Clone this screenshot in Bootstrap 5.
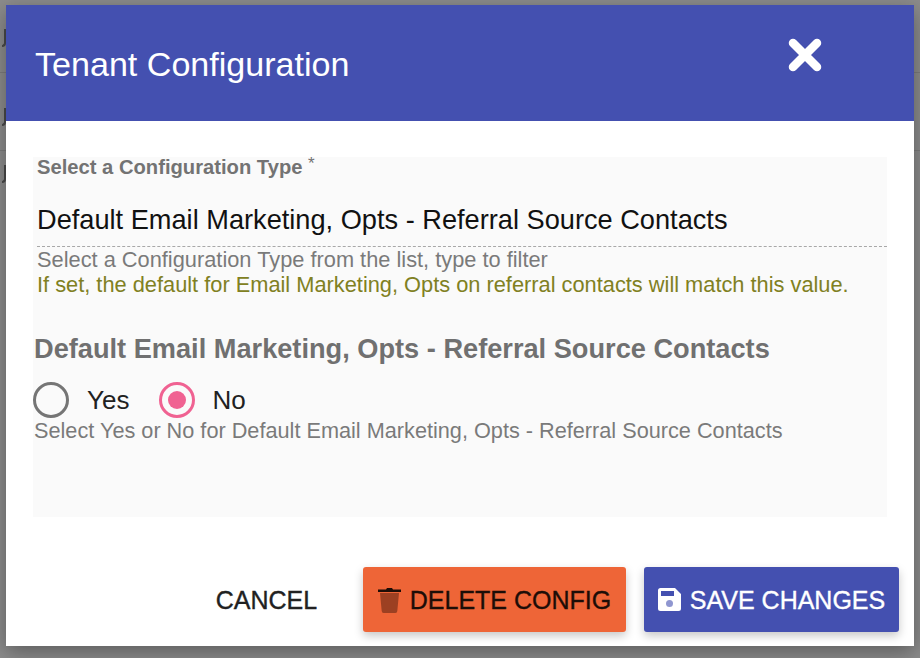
<!DOCTYPE html>
<html lang="en">
<head>
<meta charset="utf-8">
<title>Tenant Configuration</title>
<link href="https://cdn.jsdelivr.net/npm/bootstrap@5.3.0/dist/css/bootstrap.min.css" rel="stylesheet">
<style>
html,body{height:100%;overflow:hidden}
body{background:#8c8c8c;font-family:"Liberation Sans",Arial,sans-serif;color:#212121;position:relative}
.under-page{position:absolute;inset:0;z-index:0}
.under-line{position:absolute;left:0;right:0;height:1px;background:#7c7c7c}
.under-mark{position:absolute;left:0;width:6px;overflow:hidden;display:block}
.under-mark::before{content:"";display:block;width:4px;height:18px;margin-left:2px;border-radius:0 0 5px 0;border-right:2px solid #4a4a4a;border-bottom:2px solid #4a4a4a;filter:blur(.4px)}
.dialog-wrap{position:relative;z-index:1;padding:5px 6px 12px}
.dialog-box{height:641px;background:#fff;box-shadow:0 6px 20px rgba(0,0,0,.35)}
.dialog-head{height:116px;background:#4450b0;color:#fff;padding:0 30px 0 29px}
.dialog-title{font-size:34.1px;font-weight:400;margin:0;line-height:1;position:relative;top:1px}
.close-x{width:36px;height:36px;margin-right:61px;background:none;border:0;padding:0;display:block;position:relative;top:-8px}
.dialog-body{padding:36px 27px 0 27px}
.form-panel{height:360px;background:#fafafa}
.select-block{padding:0 0 0 4px}
.field-label{font-size:20.2px;font-weight:700;color:#737373;line-height:21px;display:block}
.field-label sup{font-size:17px;font-weight:400;top:-.3em}
.fake-select{font-size:27.2px;line-height:31px;color:#111;padding-top:26px;padding-bottom:11px;border-bottom:1px dashed #a8a8a8}
.help-gray{font-size:21.8px;color:#7a7a7a;line-height:25px;margin-top:0}
.help-olive{font-size:21.8px;color:#808022;line-height:25px}
.radio-heading{font-size:27.2px;font-weight:700;color:#707070;line-height:32px;margin:0;padding:36px 0 0 1px}
.radio-row{height:36px;margin-top:17px}
.radio-ring{width:36px;height:36px;border-radius:50%;border:3px solid #757575;flex:none;display:flex;align-items:center;justify-content:center}
.radio-ring.is-on{border-color:#f06292}
.radio-ring.is-on::after{content:"";width:18px;height:18px;border-radius:50%;background:#f06292}
.radio-txt{font-size:26px;color:#212121;margin-left:18px;margin-right:30px;line-height:36px}
.is-on + .radio-txt{margin-left:17px}
.radio-help{font-size:21.7px;color:#7a7a7a;line-height:24px;margin-top:1px;padding-left:1px}
.dialog-foot{padding:50px 15px 0 0}
.act-btn{height:65px;border-radius:3px;border:0;font-size:25px;line-height:1;font-weight:400;display:flex;align-items:center;justify-content:center;box-shadow:0 4px 10px rgba(0,0,0,.22);-webkit-text-stroke:.35px currentColor;padding:8px 6px 6px}
.act-cancel{background:transparent;box-shadow:none;color:#212121;width:135px;margin-right:29px}
.act-delete{background:#ee6537;color:#1d0d07;width:263px;margin-right:18px}
.act-save{background:#4450b0;color:#fff;width:255px}
.act-btn svg{flex:none;margin-right:9px;margin-top:-2px}
</style>
</head>
<body>
<div class="under-page" aria-hidden="true">
  <div class="under-line" style="top:72px"></div>
  <div class="under-line" style="top:150px"></div>
  <span class="under-mark" style="top:29px"></span>
  <span class="under-mark" style="top:108px"></span>
  <span class="under-mark" style="top:165px"></span>
</div>
<div class="dialog-wrap">
  <div class="dialog-box d-flex flex-column">
    <div class="dialog-head d-flex align-items-center justify-content-between">
      <h5 class="dialog-title">Tenant Configuration</h5>
      <button class="close-x" type="button" aria-label="Close">
        <svg width="36" height="36" viewBox="0 0 36 36"><path d="M6 6 30 30M30 6 6 30" stroke="#fff" stroke-width="8.5" stroke-linecap="round"/></svg>
      </button>
    </div>
    <div class="dialog-body">
      <div class="form-panel">
        <div class="select-block">
          <label class="field-label">Select a Configuration Type <sup>*</sup></label>
          <div class="fake-select">Default Email Marketing, Opts - Referral Source Contacts</div>
          <div class="help-gray">Select a Configuration Type from the list, type to filter</div>
          <div class="help-olive">If set, the default for Email Marketing, Opts on referral contacts will match this value.</div>
        </div>
        <h6 class="radio-heading">Default Email Marketing, Opts - Referral Source Contacts</h6>
        <div class="radio-row d-flex align-items-center">
          <span class="radio-ring"></span><span class="radio-txt">Yes</span>
          <span class="radio-ring is-on"></span><span class="radio-txt">No</span>
        </div>
        <div class="radio-help">Select Yes or No for Default Email Marketing, Opts - Referral Source Contacts</div>
      </div>
    </div>
    <div class="dialog-foot d-flex justify-content-end">
      <button type="button" class="btn act-btn act-cancel">CANCEL</button>
      <button type="button" class="btn act-btn act-delete">
        <svg width="23" height="26" viewBox="0 0 23 26"><path d="M2 6h19l-1.700 18a2 2 0 0 1-2 2H5.700a2 2 0 0 1-2-2z" fill="#9c4022"/><path d="M0 2.500h8l1-1.500h5l1 1.500h8v2.500H0z" fill="#1d0d07"/></svg>
        DELETE CONFIG
      </button>
      <button type="button" class="btn act-btn act-save">
        <svg width="23" height="23" viewBox="0 0 23 23"><path d="M2.500 0H17l6 6v14.500a2.500 2.500 0 0 1-2.500 2.500h-18A2.500 2.500 0 0 1 0 20.500v-18A2.500 2.500 0 0 1 2.500 0z" fill="#fff"/><rect x="3" y="3" width="13" height="5" fill="#4450b0"/><circle cx="11.500" cy="15.500" r="3.500" fill="#8f96d0"/></svg>
        SAVE CHANGES
      </button>
    </div>
  </div>
</div>
<script src="https://cdn.jsdelivr.net/npm/bootstrap@5.3.0/dist/js/bootstrap.bundle.min.js"></script>
</body>
</html>
